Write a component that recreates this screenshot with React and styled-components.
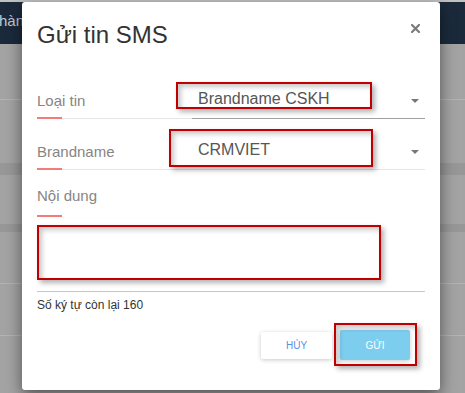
import React from 'react';
import styled, { createGlobalStyle } from 'styled-components';

const GlobalStyle = createGlobalStyle`
  html, body {
    margin: 0;
    padding: 0;
    overflow: hidden;
  }
  body {
    font-family: "Liberation Sans", Arial, sans-serif;
  }
  * { box-sizing: border-box; }
`;

const Page = styled.div`
  position: relative;
  width: 465px;
  height: 393px;
  background: #a3a3a3;
  overflow: hidden;
`;

const TopStrip = styled.div`
  height: 2px;
  background: #c2c2c2;
`;

const NavBar = styled.div`
  height: 42px;
  background: #1b2a3b;
  color: #c3cad2;
  font-size: 15px;
  line-height: 18px;
  padding-top: 10px;
  white-space: nowrap;
`;

const NavText = styled.span`
  margin-left: -1px;
`;

const BgRow = styled.div`
  height: ${p => p.$h}px;
  background: ${p => (p.$dark ? '#979797' : 'transparent')};
  border-bottom: ${p => (p.$line ? '1px solid #b3b3b3' : 'none')};
`;

const Modal = styled.div`
  position: absolute;
  left: 22px;
  top: 2px;
  width: 418px;
  height: 388px;
  background: #fff;
  border-radius: 3px;
  box-shadow: 0 5px 15px rgba(0, 0, 0, 0.5);
  display: flex;
  flex-direction: column;
`;

const Header = styled.div`
  height: 56px;
  padding: 19px 15px 0;
  display: flex;
  justify-content: space-between;
  align-items: flex-start;
`;

const Title = styled.h4`
  margin: 0;
  font-size: 24px;
  line-height: 27px;
  font-weight: normal;
  color: #333;
`;

const Close = styled.button`
  border: 0;
  background: none;
  padding: 0;
  margin: 3px 5px 0 0;
  width: 9px;
  height: 9px;
  display: flex;
`;

const Body = styled.div`
  padding: 0 15px;
`;

const Field = styled.div`
  display: flex;
  align-items: flex-end;
  height: ${p => p.$h}px;
  border-bottom: ${p => (p.$line ? '1px solid #e6e6e6' : 'none')};
`;

const LabelCol = styled.div`
  width: ${p => (p.$full ? 'auto' : '155px')};
  display: flex;
  flex-direction: column;
`;

const Label = styled.label`
  font-size: 15px;
  line-height: 18px;
  color: #858585;
  margin-bottom: ${p => p.$gap}px;
`;

const Bar = styled.div`
  width: 25px;
  height: 2px;
  background: #f27b7b;
  margin-bottom: ${p => (p.$onLine ? '-1px' : '0')};
`;

const SelectCol = styled.div`
  flex: 1;
  display: flex;
  align-items: center;
  justify-content: space-between;
  padding: 0 6px 9px 6px;
  margin-bottom: -1px;
  border-bottom: 1px solid ${p => (p.$focus ? '#a0a0a0' : '#e6e6e6')};
`;

const SelectValue = styled.span`
  font-size: 16px;
  line-height: 20px;
  color: #565656;
`;

const Caret = styled.svg`
  margin-top: 3px;
`;

const TextArea = styled.div`
  height: 75px;
  border-bottom: 1px solid #c6c6c6;
`;

const Counter = styled.div`
  margin-top: 6px;
  font-size: 12px;
  line-height: 15px;
  color: #333;
`;

const Footer = styled.div`
  margin-top: 17px;
  padding-right: 15px;
  height: 30px;
  display: flex;
  justify-content: flex-end;
  align-items: center;
  gap: 8px;
`;

const Button = styled.button`
  width: ${p => p.$w}px;
  height: ${p => p.$h}px;
  padding: 0;
  border: 0;
  border-radius: 2px;
  font-family: "Liberation Sans", Arial, sans-serif;
  font-size: 10px;
  background: ${p => (p.$primary ? '#7dcdee' : '#fff')};
  color: ${p => (p.$primary ? '#fff' : '#5b8fe8')};
  box-shadow: 0 1px 4px rgba(0, 0, 0, 0.22);
`;

const Highlight = styled.div`
  position: absolute;
  left: ${p => p.$x}px;
  top: ${p => p.$y}px;
  width: ${p => p.$w}px;
  height: ${p => p.$h}px;
  border: 2px solid #c00000;
  box-shadow: 3px 3px 5px rgba(0, 0, 0, 0.3), inset 3px 3px 5px rgba(0, 0, 0, 0.22);
  pointer-events: none;
`;

const CaretIcon = () => (
  <Caret width="8" height="4" viewBox="0 0 8 4">
    <polygon points="0,0 8,0 4,4" fill="#777" />
  </Caret>
);

const App = () => (
  <Page>
    <GlobalStyle />
    <TopStrip />
    <NavBar><NavText>hàn</NavText></NavBar>
    <BgRow $h={56} $line />
    <BgRow $h={63} />
    <BgRow $h={12} $dark />
    <BgRow $h={49} />
    <BgRow $h={8} $dark />
    <BgRow $h={52} $line />
    <BgRow $h={52} $line />

    <Modal>
      <Header>
        <Title>Gửi tin SMS</Title>
        <Close aria-label="close">
          <svg width="9" height="9" viewBox="0 0 9 9">
            <path d="M1 1 L8 8 M8 1 L1 8" stroke="#7b7b7b" strokeWidth="2.2" strokeLinecap="square" />
          </svg>
        </Close>
      </Header>

      <Body>
        <Field $h={61} $line>
          <LabelCol>
            <Label $gap={7}>Loại tin</Label>
            <Bar $onLine />
          </LabelCol>
          <SelectCol $focus>
            <SelectValue>Brandname CSKH</SelectValue>
            <CaretIcon />
          </SelectCol>
        </Field>

        <Field $h={51} $line>
          <LabelCol>
            <Label $gap={7}>Brandname</Label>
            <Bar $onLine />
          </LabelCol>
          <SelectCol>
            <SelectValue>CRMVIET</SelectValue>
            <CaretIcon />
          </SelectCol>
        </Field>

        <Field $h={47}>
          <LabelCol $full>
            <Label $gap={10}>Nội dung</Label>
            <Bar />
          </LabelCol>
        </Field>

        <TextArea />
        <Counter>Số ký tự còn lại 160</Counter>

        <Footer>
          <Button $w={71} $h={27}>HỦY</Button>
          <Button $w={70} $h={30} $primary>GỬI</Button>
        </Footer>
      </Body>

      <Highlight $x={154} $y={80} $w={196} $h={27} />
      <Highlight $x={147} $y={127} $w={204} $h={38} />
      <Highlight $x={15} $y={223} $w={344} $h={55} />
      <Highlight $x={312} $y={321} $w={83} $h={43} />
    </Modal>
  </Page>
);

export default App;
